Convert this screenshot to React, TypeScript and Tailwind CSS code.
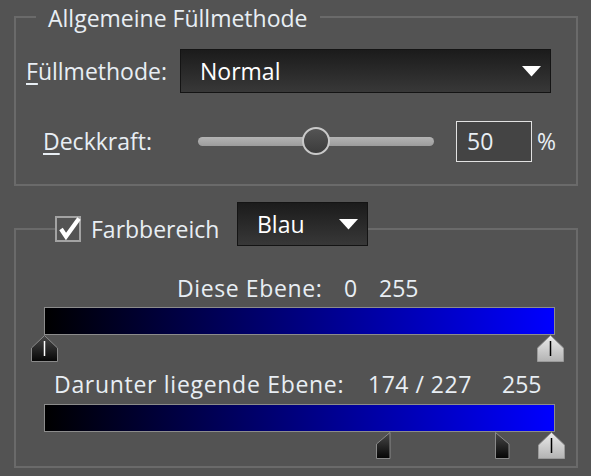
import React from "react";

const font = "font-['Open_Sans','Noto_Sans',sans-serif]";
const txt = "text-[23px] leading-[27px]";

function Arrow() {
  return (
    <svg width="19" height="11" viewBox="0 0 19 11">
      <polygon points="0,0 19,0 9.5,10.5" fill="#ffffff" />
    </svg>
  );
}

function Dropdown({ label, width }: { label: string; width: string }) {
  return (
    <div className={`${width} h-[44px] flex items-center justify-between pl-[19px] pr-[9px] border border-[#141414] bg-[linear-gradient(to_bottom,#1b1b1b,#383838)]`}>
      <span className={`${txt} text-white`}>{label}</span>
      <Arrow />
    </div>
  );
}

// slider handles under the colour bars
function FullHandle({ light }: { light?: boolean }) {
  const id = light ? "hl" : "hd";
  return (
    <svg width="27" height="27" viewBox="0 0 27 27">
      <defs>
        <linearGradient id={id} x1="0" y1="0" x2="0" y2="1">
          <stop offset="0" stopColor={light ? "#ececec" : "#4a4a4a"} />
          <stop offset="1" stopColor={light ? "#b3b3b3" : "#050505"} />
        </linearGradient>
      </defs>
      <polygon points="13.5,0.5 26.5,13 26.5,26.5 0.5,26.5 0.5,13" fill={`url(#${id})`} stroke={light ? "#9a9a9a" : "#8a8a8a"} strokeWidth="1" />
      <line x1="13.5" y1="6" x2="13.5" y2="21" stroke={light ? "#000" : "#fff"} strokeWidth="1.5" />
    </svg>
  );
}

function HalfHandle({ side }: { side: "left" | "right" }) {
  const pts = side === "left" ? "14,0.5 14,26.5 0.5,26.5 0.5,12" : "0.5,0.5 14,12 14,26.5 0.5,26.5";
  return (
    <svg width="15" height="27" viewBox="0 0 15 27">
      <defs>
        <linearGradient id={`hh${side}`} x1="0" y1="0" x2="0" y2="1">
          <stop offset="0" stopColor="#4a4a4a" />
          <stop offset="1" stopColor="#050505" />
        </linearGradient>
      </defs>
      <polygon points={pts} fill={`url(#hh${side})`} stroke="#8a8a8a" strokeWidth="1" />
    </svg>
  );
}

function ColourBar() {
  return <div className="w-[511px] h-[28px] border border-[#8c8c8c] bg-[linear-gradient(to_right,#000000,#0000ff)]" />;
}

export default function App() {
  return (
    <div className={`w-[591px] h-[476px] bg-[#535353] px-[14px] pt-[5px] text-[#e8eef4] ${font}`}>
      {/* Allgemeine Füllmethode */}
      <fieldset className="w-[564px] border-2 border-[#6a6a6a] pb-[22px]">
        <legend className={`ml-[20px] px-[12px] h-[24px] ${txt}`}>Allgemeine Füllmethode</legend>

        <div className="mt-[20px] pl-[10px] flex items-center">
          <span className={`w-[154px] ${txt}`}>
            <span className="underline underline-offset-[3px]">F</span>üllmethode:
          </span>
          <Dropdown label="Normal" width="w-[371px]" />
        </div>

        <div className="mt-[28px] pl-[27px] flex items-center h-[41px]">
          <span className={`w-[155px] ${txt}`}>
            <span className="underline underline-offset-[3px]">D</span>eckkraft:
          </span>
          <div className="relative w-[236px] h-[9px] rounded-full bg-[linear-gradient(to_bottom,#b4b4b4,#9c9c9c)]">
            <div className="absolute left-[104px] top-[-10px] w-[28px] h-[28px] rounded-full border-2 border-[#c9c9c9] bg-[linear-gradient(to_bottom,#545454,#3c3c3c)]" />
          </div>
          <div className={`ml-[22px] w-[76px] h-[41px] border border-[#e2e2e2] bg-[#444444] flex items-center pl-[10px] ${txt}`}>50</div>
          <span className={`ml-[5px] ${txt}`}>%</span>
        </div>
      </fieldset>

      {/* Farbbereich */}
      <fieldset className="mt-[16px] w-[564px] border-2 border-[#6a6a6a] pl-[28px] pb-[7px]">
        <legend className="ml-[11px] h-[53px] pb-[10px] flex items-start">
          <div className="relative mt-[14px] w-[26px] h-[26px] border-2 border-[#a3a3a3]">
            <svg className="absolute left-[-2px] top-[-2px] overflow-visible" width="26" height="26" viewBox="0 0 26 26">
              <polyline points="6,13 11,20.5 24,2.5" fill="none" stroke="#ffffff" strokeWidth="4.2" strokeLinejoin="miter" />
            </svg>
          </div>
          <span className={`mt-[14px] ml-[10px] w-[146px] ${txt}`}>Farbbereich</span>
          <Dropdown label="Blau" width="w-[131px]" />
        </legend>

        <div className={`mt-[20px] pl-[133px] flex ${txt}`}>
          <span className="w-[167px] tracking-[0.6px]">Diese Ebene:</span>
          <span className="w-[35px]">0</span>
          <span>255</span>
        </div>
        <div className="mt-[5px]">
          <ColourBar />
        </div>
        <div className="relative h-[27px] w-[511px]">
          <div className="absolute left-[-13px] top-0"><FullHandle /></div>
          <div className="absolute left-[493px] top-0"><FullHandle light /></div>
        </div>

        <div className={`mt-[9px] pl-[10px] flex ${txt}`}>
          <span className="w-[314px] tracking-[0.7px]">Darunter liegende Ebene:</span>
          <span className="w-[134px] tracking-[0.5px]">174 / 227</span>
          <span>255</span>
        </div>
        <div className="mt-[6px]">
          <ColourBar />
        </div>
        <div className="relative h-[27px] w-[511px]">
          <div className="absolute left-[332px] top-0"><HalfHandle side="left" /></div>
          <div className="absolute left-[451px] top-0"><HalfHandle side="right" /></div>
          <div className="absolute left-[494px] top-0"><FullHandle light /></div>
        </div>
      </fieldset>
    </div>
  );
}
